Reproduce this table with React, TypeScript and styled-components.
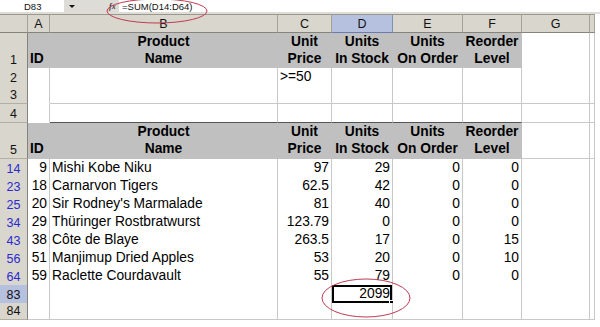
import React from "react";
import styled, { createGlobalStyle, css } from "styled-components";

const GlobalStyle = createGlobalStyle`
  html, body { margin: 0; padding: 0; background: #ffffff; }
  body { font-family: "Liberation Sans", Arial, sans-serif; }
`;

const COLS = "28px 22px 228px 54px 61px 70px 59px 68px 5px 1fr";
const GRID = "#c8c8c8";
const HDR = "#d9d6cd";
const FILL = "#c0c0c0";

const Page = styled.div`
  position: relative;
  width: 600px;
  height: 327px;
  overflow: hidden;
  background: #fff;
`;

const FormulaBar = styled.div`
  display: flex;
  align-items: flex-start;
  height: 14px;
  background: #dedcd6;
  font-size: 9.5px;
  color: #111;
`;

const NameBox = styled.div`
  width: 64px;
  height: 12px;
  background: #fff;
  display: flex;
  align-items: center;
  padding-left: 24px;
  box-sizing: border-box;
`;

const DropArrow = styled.div`
  width: 0;
  height: 0;
  margin: 5px 0 0 5px;
  border-left: 3px solid transparent;
  border-right: 3px solid transparent;
  border-top: 3px solid #111;
`;

const Fx = styled.div`
  margin-left: 34px;
  width: 8px;
  height: 12px;
  font-style: italic;
  font-weight: 700;
  font-family: "Liberation Serif", serif;
  font-size: 8px;
  color: #444;
  display: flex;
  align-items: center;
`;

const FormulaInput = styled.div`
  flex: 1;
  height: 12px;
  margin-left: 2px;
  background: #fff;
  display: flex;
  align-items: center;
  padding-left: 3px;
`;

const Sheet = styled.div`
  display: flex;
  flex-direction: column;
`;

const Row = styled.div<{ $h: number }>`
  display: grid;
  grid-template-columns: ${COLS};
  height: ${(p) => p.$h}px;
`;

const ColHeader = styled.div<{ $sel?: boolean }>`
  box-sizing: border-box;
  background: ${(p) => (p.$sel ? "#b6c0df" : HDR)};
  border-top: 1px solid #9a978d;
  border-right: 1px solid ${(p) => (p.$sel ? "#7f8fb8" : "#a7a397")};
  border-bottom: 1px solid ${(p) => (p.$sel ? "#6a7bb0" : "#86837a")};
  display: flex;
  align-items: center;
  justify-content: center;
  font-size: 12.5px;
  color: #111;
`;

const Corner = styled(ColHeader)``;

const Blank = styled.div``;

const RowHeader = styled.div<{ $blue?: boolean; $sel?: boolean }>`
  box-sizing: border-box;
  background: ${(p) => (p.$sel ? "#b6c0df" : HDR)};
  border-right: 1px solid #86837a;
  border-bottom: 1px solid ${(p) => (p.$sel ? "#7f8fb8" : "#b3afa3")};
  display: flex;
  align-items: flex-end;
  justify-content: center;
  padding-bottom: 1px;
  font-size: 12.5px;
  color: ${(p) => (p.$blue ? "#2a2ad0" : "#111")};
`;

const Cell = styled.div<{
  $align?: "left" | "right" | "center";
  $fill?: boolean;
  $bold?: boolean;
  $noBottom?: boolean;
  $thickBottom?: boolean;
  $sel?: boolean;
}>`
  position: relative;
  box-sizing: border-box;
  display: flex;
  flex-direction: column;
  justify-content: flex-end;
  align-items: ${(p) =>
    p.$align === "right" ? "flex-end" : p.$align === "center" ? "center" : "flex-start"};
  text-align: ${(p) => p.$align || "left"};
  padding: 0 2px 1px 2px;
  font-size: 13.8px;
  line-height: 17px;
  white-space: nowrap;
  color: #000;
  background: ${(p) => (p.$fill ? FILL : "#fff")};
  font-weight: ${(p) => (p.$bold ? 700 : 400)};
  border-right: 1px solid ${(p) => (p.$fill ? FILL : GRID)};
  border-bottom: 1px solid
    ${(p) =>
      p.$thickBottom ? "#555" : p.$noBottom ? "#fff" : p.$fill ? FILL : GRID};
  ${(p) =>
    p.$sel &&
    css`
      box-shadow: inset 0 0 0 2px #000;
      &::after {
        content: "";
        position: absolute;
        right: -2px;
        bottom: -2px;
        width: 5px;
        height: 5px;
        background: #000;
        border: 1px solid #fff;
        box-sizing: border-box;
      }
    `}
`;

const Overlay = styled.svg`
  position: absolute;
  left: 0;
  top: 0;
  pointer-events: none;
`;

const letters = ["A", "B", "C", "D", "E", "F", "G"];

const headers: [string, string][] = [
  ["Product", "Name"],
  ["Unit", "Price"],
  ["Units", "In Stock"],
  ["Units", "On Order"],
  ["Reorder", "Level"],
];

type DataRow = [string, string, string, string, string, string, string];

const data: DataRow[] = [
  ["14", "9", "Mishi Kobe Niku", "97", "29", "0", "0"],
  ["23", "18", "Carnarvon Tigers", "62.5", "42", "0", "0"],
  ["25", "20", "Sir Rodney's Marmalade", "81", "40", "0", "0"],
  ["34", "29", "Thüringer Rostbratwurst", "123.79", "0", "0", "0"],
  ["43", "38", "Côte de Blaye", "263.5", "17", "0", "15"],
  ["56", "51", "Manjimup Dried Apples", "53", "20", "0", "10"],
  ["64", "59", "Raclette Courdavault", "55", "79", "0", "0"],
];

function HeaderRow({ num, h }: { num: string; h: number }) {
  return (
    <Row $h={h}>
      <RowHeader>{num}</RowHeader>
      <Cell $fill $bold>
        ID
      </Cell>
      {headers.map(([a, b], i) => (
        <Cell key={i} $fill $bold $align="center">
          <span>{a}</span>
          <span>{b}</span>
        </Cell>
      ))}
      <Cell />
      <Cell />
      <Blank />
    </Row>
  );
}

function EmptyRow({
  num,
  h,
  c = "",
  last,
}: {
  num: string;
  h: number;
  c?: string;
  last?: boolean;
}) {
  return (
    <Row $h={h}>
      <RowHeader>{num}</RowHeader>
      <Cell $noBottom />
      <Cell $thickBottom={last} />
      <Cell $thickBottom={last}>{c}</Cell>
      <Cell $thickBottom={last} />
      <Cell $thickBottom={last} />
      <Cell $thickBottom={last} />
      <Cell />
      <Cell />
      <Blank />
    </Row>
  );
}

export default function App() {
  return (
    <>
      <GlobalStyle />
      <Page>
        <FormulaBar>
          <NameBox>D83</NameBox>
          <DropArrow />
          <Fx>fx</Fx>
          <FormulaInput>=SUM(D14:D64)</FormulaInput>
        </FormulaBar>
        <Sheet>
          <Row $h={19}>
            <Corner />
            {letters.map((l) => (
              <ColHeader key={l} $sel={l === "D"}>
                {l}
              </ColHeader>
            ))}
            <ColHeader />
            <Blank />
          </Row>
          <HeaderRow num="1" h={35} />
          <EmptyRow num="2" h={18} c=">=50" />
          <EmptyRow num="3" h={18} />
          <EmptyRow num="4" h={19} last />
          <HeaderRow num="5" h={36} />
          {data.map((r) => (
            <Row $h={18} key={r[0]}>
              <RowHeader $blue>{r[0]}</RowHeader>
              <Cell $align="right">{r[1]}</Cell>
              <Cell>{r[2]}</Cell>
              <Cell $align="right">{r[3]}</Cell>
              <Cell $align="right">{r[4]}</Cell>
              <Cell $align="right">{r[5]}</Cell>
              <Cell $align="right">{r[6]}</Cell>
              <Cell />
              <Cell />
              <Blank />
            </Row>
          ))}
          <Row $h={18}>
            <RowHeader $sel>83</RowHeader>
            <Cell />
            <Cell />
            <Cell />
            <Cell $align="right" $sel>
              2099
            </Cell>
            <Cell />
            <Cell />
            <Cell />
            <Cell />
            <Blank />
          </Row>
          <Row $h={17}>
            <RowHeader>84</RowHeader>
            <Cell />
            <Cell />
            <Cell />
            <Cell />
            <Cell />
            <Cell />
            <Cell />
            <Cell />
            <Blank />
          </Row>
        </Sheet>
        <Overlay width="600" height="327" viewBox="0 0 600 327">
          <ellipse cx="157" cy="11" rx="50" ry="12" fill="none" stroke="#c23a52" strokeWidth="1" />
          <ellipse cx="366" cy="298" rx="44" ry="19" fill="none" stroke="#c23a52" strokeWidth="1" />
        </Overlay>
      </Page>
    </>
  );
}
